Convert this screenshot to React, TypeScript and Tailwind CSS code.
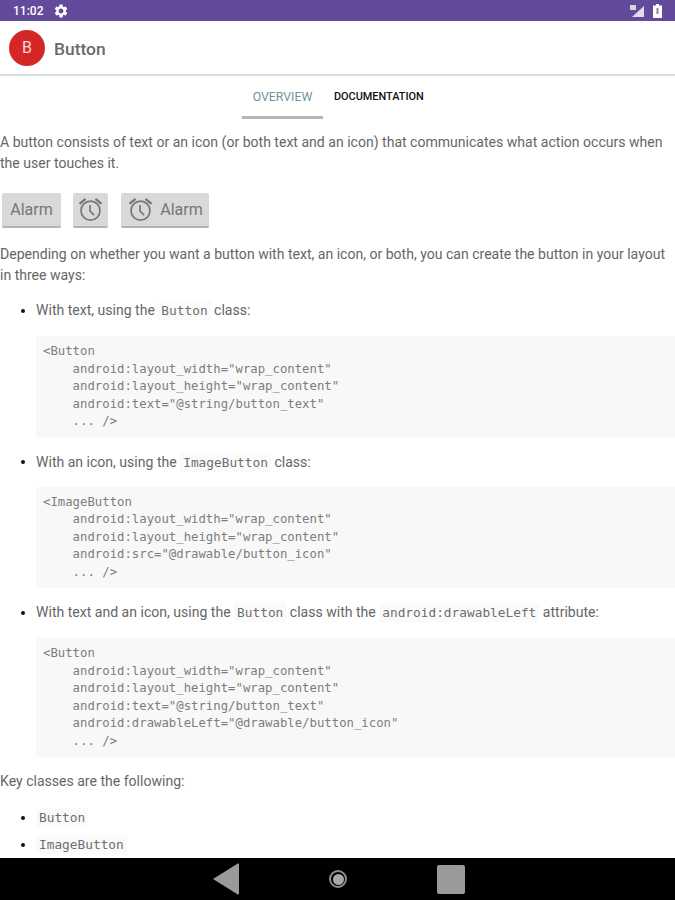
const bodyFont = "font-['Roboto',sans-serif]"
const monoFont = "font-['DejaVu_Sans_Mono',monospace]"

function AlarmIcon() {
  return (
    <svg width="27" height="27" viewBox="0 0 24 24" fill="none" stroke="#777777" strokeWidth="1.5" aria-hidden="true">
      <circle cx="12" cy="13" r="8.4" />
      <path d="M11.6 8v5.4l3.6 3.6" />
      <path d="M2.2 7 7.6 2.6M21.8 7 16.4 2.6" strokeWidth="2" />
    </svg>
  )
}

function GearIcon() {
  return (
    <svg width="16" height="16" viewBox="0 0 24 24" fill="#ffffff" aria-hidden="true">
      <path d="M19.14 12.94c.04-.3.06-.61.06-.94 0-.32-.02-.64-.07-.94l2.03-1.58c.18-.14.23-.41.12-.61l-1.92-3.32c-.12-.22-.37-.29-.59-.22l-2.39.96c-.5-.38-1.03-.7-1.62-.94l-.36-2.54c-.04-.24-.24-.41-.48-.41h-3.84c-.24 0-.43.17-.47.41l-.36 2.54c-.59.24-1.13.57-1.62.94l-2.39-.96c-.22-.08-.47 0-.59.22L2.74 8.87c-.12.21-.08.47.12.61l2.03 1.58c-.05.3-.09.63-.09.94s.02.64.07.94l-2.03 1.58c-.18.14-.23.41-.12.61l1.92 3.32c.12.22.37.29.59.22l2.39-.96c.5.38 1.03.7 1.62.94l.36 2.54c.05.24.24.41.48.41h3.84c.24 0 .44-.17.47-.41l.36-2.54c.59-.24 1.13-.56 1.62-.94l2.39.96c.22.08.47 0 .59-.22l1.92-3.32c.12-.22.07-.47-.12-.61l-2.01-1.58zM12 15.6c-1.98 0-3.6-1.62-3.6-3.6s1.62-3.6 3.6-3.6 3.6 1.62 3.6 3.6-1.62 3.6-3.6 3.6z" />
    </svg>
  )
}

function GreyButton({ children, className = '' }: { children: React.ReactNode; className?: string }) {
  return (
    <div
      className={`flex h-[35px] items-center justify-center gap-[6px] rounded-[2px] border-b-2 border-[#b4b4b4] bg-[#d9d9d9] text-[16px] text-[#767676] ${className}`}
    >
      {children}
    </div>
  )
}

function Code({ children }: { children: string }) {
  return (
    <code className={`${monoFont} rounded-[2px] bg-[#fafafa] px-[3px] py-[2px] text-[12.8px] text-[#6e6e6e]`}>
      {children}
    </code>
  )
}

function Bullet({ children, className = '' }: { children: React.ReactNode; className?: string }) {
  return (
    <div className={`flex h-[21px] items-center pl-[21px] ${className}`}>
      <span className="mr-[11px] h-[4px] w-[4px] shrink-0 rounded-full bg-[#111111]" />
      <span className="whitespace-pre">{children}</span>
    </div>
  )
}

function CodeBlock({ lines, className = '' }: { lines: string[]; className?: string }) {
  return (
    <pre className={`${monoFont} ml-[36px] bg-[#f8f8f8] py-[7px] pl-[7px] text-[12.3px] leading-[17.5px] text-[#7d7d7d] ${className}`}>
      {lines.join('\n')}
    </pre>
  )
}

export default function App() {
  return (
    <div className={`${bodyFont} flex h-[900px] w-[675px] flex-col overflow-hidden bg-white text-[14.05px] text-[#666666]`}>
      {/* status bar */}
      <div className="flex h-[21px] shrink-0 items-center justify-between bg-[#634a9a] pl-[13px] pr-[13px] text-white">
        <div className="flex items-center gap-[10px]">
          <span className="text-[12px] font-medium">11:02</span>
          <GearIcon />
        </div>
        <div className="flex items-center gap-[8px]">
          <svg width="16" height="14" viewBox="0 0 16 14" aria-hidden="true">
            <path d="M1 1h6v5H1z" fill="#d9d2e6" />
            <path d="M15 2v11H3z" fill="#ffffff" opacity="0.8" />
          </svg>
          <svg width="9" height="14" viewBox="0 0 9 14" aria-hidden="true">
            <path d="M3 0h3v1.5h3V14H0V1.5h3z" fill="#ffffff" />
            <path d="M3.5 4h2v6h-2z" fill="#8f7bb5" />
          </svg>
        </div>
      </div>

      {/* title bar */}
      <div className="flex h-[55px] shrink-0 items-center border-b-2 border-[#dcdcdc] pl-[9px] pt-[1px]">
        <div className="flex h-[36px] w-[36px] items-center justify-center rounded-full bg-[#d62728] text-[16px] text-[#f8d7d7]">
          B
        </div>
        <span className="ml-[9px] pt-[2px] text-[17.4px] font-medium text-[#6a6a6a]">Button</span>
      </div>

      {/* tabs */}
      <div className="flex h-[43px] shrink-0 pl-[242px]">
        <div className="flex h-[43px] w-[81px] items-center justify-center border-b-[3px] border-[#b5b5b5] pt-[2px] text-[12.3px] text-[#78909c]">
          OVERVIEW
        </div>
        <div className="ml-[11px] flex h-[43px] items-center text-[10.9px] font-medium text-[#111111]">DOCUMENTATION</div>
      </div>

      {/* article */}
      <div className="flex min-h-0 flex-1 flex-col overflow-hidden leading-[21px]">
        <p className="mt-[13px]">
          A button consists of text or an icon (or both text and an icon) that communicates what action occurs when the user touches it.
        </p>

        <div className="mt-[19px] flex gap-[12px] pl-[2px]">
          <GreyButton className="w-[59px]">Alarm</GreyButton>
          <GreyButton className="w-[35px]">
            <AlarmIcon />
          </GreyButton>
          <GreyButton className="ml-[1px] w-[88px]">
            <AlarmIcon />
            Alarm
          </GreyButton>
        </div>

        <p className="mt-[16px]">
          Depending on whether you want a button with text, an icon, or both, you can create the button in your layout in three ways:
        </p>

        <Bullet className="mt-[14px]">
          With text, using the <Code>Button</Code> class:
        </Bullet>
        <CodeBlock
          className="mt-[15px]"
          lines={[
            '<Button',
            '    android:layout_width="wrap_content"',
            '    android:layout_height="wrap_content"',
            '    android:text="@string/button_text"',
            '    ... />',
          ]}
        />

        <Bullet className="mt-[14px]">
          With an icon, using the <Code>ImageButton</Code> class:
        </Bullet>
        <CodeBlock
          className="mt-[14px]"
          lines={[
            '<ImageButton',
            '    android:layout_width="wrap_content"',
            '    android:layout_height="wrap_content"',
            '    android:src="@drawable/button_icon"',
            '    ... />',
          ]}
        />

        <Bullet className="mt-[14px]">
          With text and an icon, using the <Code>Button</Code> class with the <Code>android:drawableLeft</Code> attribute:
        </Bullet>
        <CodeBlock
          className="mt-[15px]"
          lines={[
            '<Button',
            '    android:layout_width="wrap_content"',
            '    android:layout_height="wrap_content"',
            '    android:text="@string/button_text"',
            '    android:drawableLeft="@drawable/button_icon"',
            '    ... />',
          ]}
        />

        <p className="mt-[14px]">Key classes are the following:</p>
        <Bullet className="mt-[15px]">
          <Code>Button</Code>
        </Bullet>
        <Bullet className="mt-[6px]">
          <Code>ImageButton</Code>
        </Bullet>
      </div>

      {/* nav bar */}
      <div className="flex h-[42px] shrink-0 items-center bg-black pl-[212px]">
        <svg width="28" height="32" viewBox="0 0 28 32" aria-hidden="true">
          <path d="M27 1.5v29a1 1 0 0 1-1.6.8L1 16 25.4.7a1 1 0 0 1 1.6.8z" fill="#9a9a9a" />
        </svg>
        <div className="ml-[89px] flex h-[18px] w-[18px] items-center justify-center rounded-full border-2 border-[#8e8e8e]">
          <div className="h-[11px] w-[11px] rounded-full bg-[#a8a8a8]" />
        </div>
        <div className="ml-[90px] h-[29px] w-[28px] rounded-[2px] bg-[#9a9a9a]" />
      </div>
    </div>
  )
}
